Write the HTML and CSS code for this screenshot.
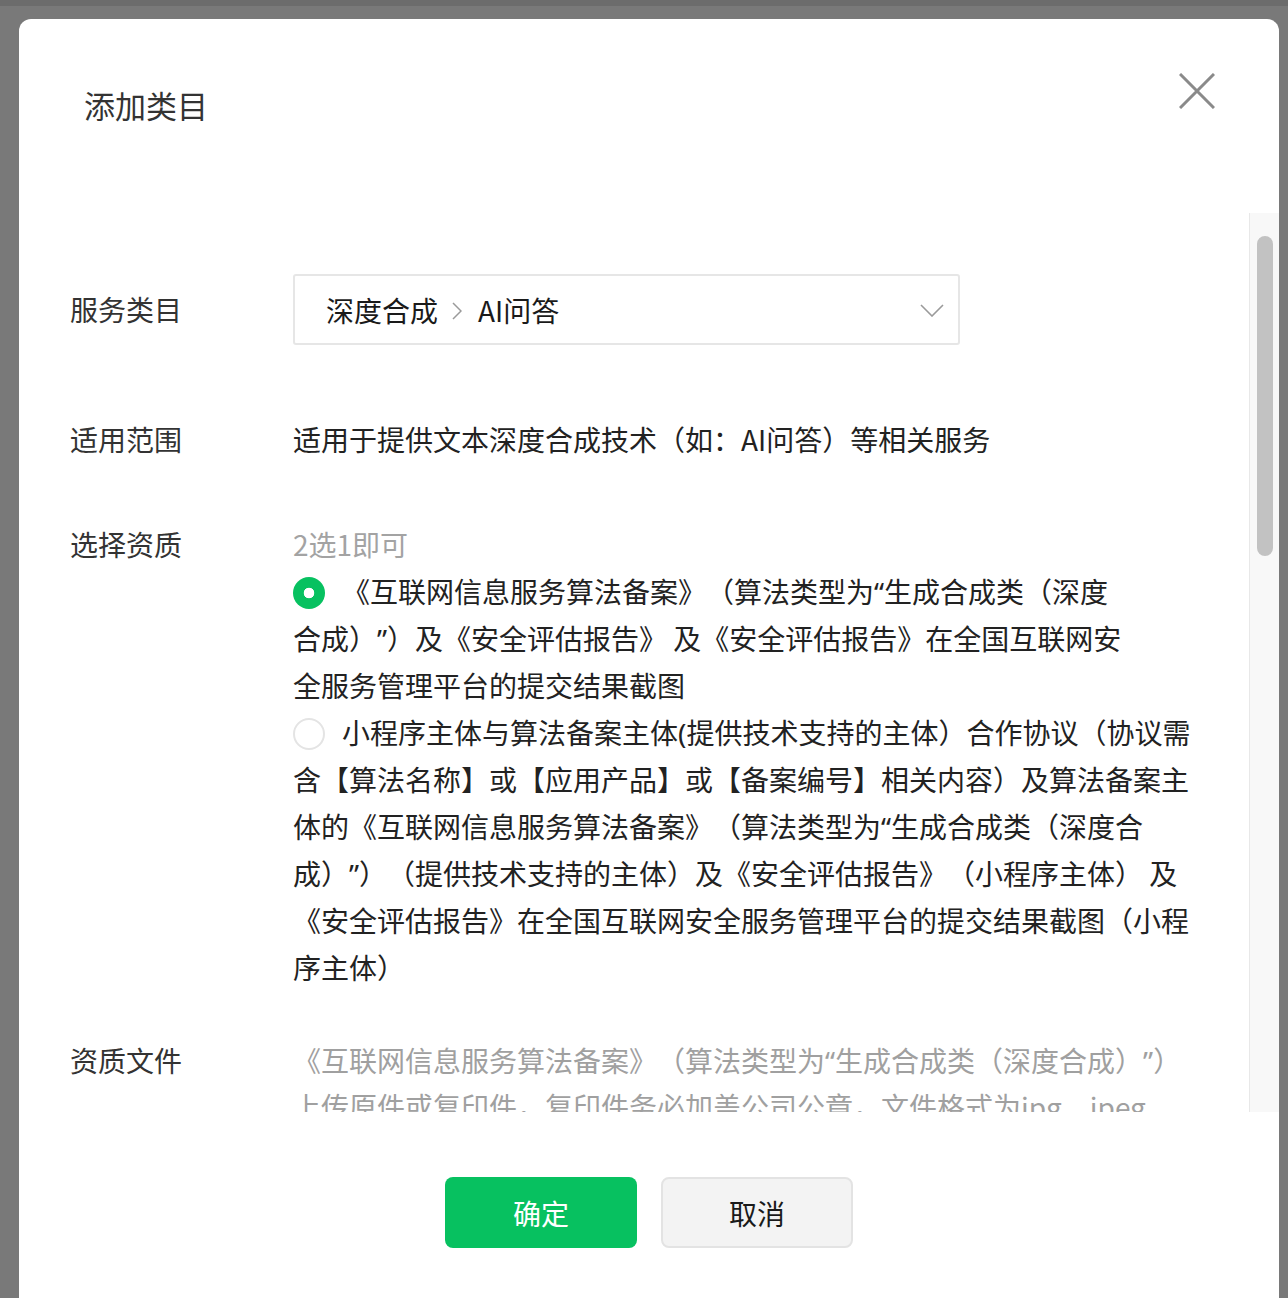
FILE: index.html
```html
<!DOCTYPE html>
<html lang="zh-CN">
<head>
<meta charset="utf-8">
<title>添加类目</title>
<link rel="stylesheet" href="styles.css">
</head>
<body>
<div class="modal">
  <div class="modal-header">
    <h2 class="modal-title">添加类目</h2>
    <button class="close-btn" aria-label="关闭">
      <svg viewBox="0 0 36 36"><path d="M1 1L35 35M35 1L1 35" stroke="#8a8a8a" stroke-width="3" fill="none"/></svg>
    </button>
  </div>
  <div class="modal-body">
    <div class="scroll-content">
      <div class="form-row row-select">
        <div class="label">服务类目</div>
        <div class="field">
          <div class="select">
            <span class="crumb">深度合成</span>
            <svg class="crumb-sep" viewBox="0 0 10 20"><polyline points="1,2 9,10 1,18" fill="none" stroke="#9a9a9a" stroke-width="1.5"/></svg>
            <span class="crumb">AI问答</span>
            <svg class="chevron" viewBox="0 0 24 13"><polyline points="1,1 12,12 23,1" fill="none" stroke="#9a9a9a" stroke-width="1.6"/></svg>
          </div>
        </div>
      </div>
      <div class="form-row row-scope">
        <div class="label">适用范围</div>
        <div class="field">适用于提供文本深度合成技术（如：AI问答）等相关服务</div>
      </div>
      <div class="form-row row-qual">
        <div class="label">选择资质</div>
        <div class="field">
          <div class="hint">2选1即可</div>
          <div class="option option-1"><span class="radio radio-on"></span>《互联网信息服务算法备案》（算法类型为<span class="q">“</span>生成合成类（深度合成）<span class="q">”</span>）及《安全评估报告》 及《安全评估报告》在全国互联网安全服务管理平台的提交结果截图</div>
          <div class="option option-2"><span class="radio radio-off"></span>小程序主体与算法备案主体<span class="q">(</span>提供技术支持的主体）合作协议（协议需含【算法名称】或【应用产品】或【备案编号】相关内容）及算法备案主体的《互联网信息服务算法备案》（算法类型为<span class="q">“</span>生成合成类（深度合成）<span class="q">”</span>）（提供技术支持的主体）及《安全评估报告》（小程序主体） 及《安全评估报告》在全国互联网安全服务管理平台的提交结果截图（小程序主体）</div>
        </div>
      </div>
      <div class="form-row row-file">
        <div class="label">资质文件</div>
        <div class="field file-desc">
          <div>《互联网信息服务算法备案》（算法类型为<span class="q">“</span>生成合成类（深度合成）<span class="q">”</span>）</div>
          <div>上传原件或复印件，复印件务必加盖公司公章，文件格式为jpg、jpeg、png，大小不超过10M</div>
        </div>
      </div>
    </div>
    <div class="scrollbar"><div class="scrollbar-thumb"></div></div>
  </div>
  <div class="modal-footer">
    <button class="btn btn-primary">确定</button>
    <button class="btn btn-default">取消</button>
  </div>
</div>
</body>
</html>
```
FILE: styles.css
```css
html, body {
  margin: 0;
  height: 1298px;
  overflow: hidden;
}
body {
  background: linear-gradient(#6c6c6c 0 6px, #797979 6px);
  font-family: "Noto Sans CJK SC", "Noto Sans", sans-serif;
  text-spacing-trim: space-all;
}
.q {
  font-family: "Noto Sans", "Liberation Sans", sans-serif;
  line-height: 0;
}
.modal {
  margin: 19px 9px 0 19px;
  width: 1260px;
  height: 1300px;
  background: #fff;
  border-radius: 12px 12px 0 0;
  display: flex;
  flex-direction: column;
}
.modal-header {
  height: 194px;
  flex: none;
  display: flex;
  justify-content: space-between;
  align-items: flex-start;
  padding: 0 64px 0 65px;
  box-sizing: border-box;
}
.modal-title {
  margin: 66px 0 0;
  font-size: 31px;
  line-height: 40px;
  font-weight: 400;
  color: #333;
}
.close-btn {
  margin-top: 54px;
  width: 36px;
  height: 36px;
  padding: 0;
  border: 0;
  background: none;
}
.close-btn svg {
  display: block;
  width: 36px;
  height: 36px;
}
.modal-body {
  height: 899px;
  flex: none;
  display: flex;
}
.scroll-content {
  flex: 1;
  overflow: hidden;
  padding: 61px 0 0 51px;
}
.form-row {
  display: flex;
}
.label {
  width: 223px;
  flex: none;
  font-size: 28px;
  line-height: 47px;
  color: #333;
}
.field {
  font-size: 28px;
  line-height: 47px;
  color: #222;
}
.row-select {
  align-items: center;
}
.select {
  width: 667px;
  height: 71px;
  box-sizing: border-box;
  border: 2px solid #e6e6e6;
  border-radius: 3px;
  display: flex;
  align-items: center;
  padding: 2px 14px 0 31px;
  color: #1a1a1a;
}
.crumb-sep {
  width: 10px;
  height: 20px;
  margin: 0 16px 0 14px;
}
.chevron {
  margin-left: auto;
  width: 24px;
  height: 13px;
}
.row-scope {
  margin-top: 71px;
}
.row-qual {
  margin-top: 58px;
}
.row-file {
  margin-top: 46px;
}
.row-file .label,
.row-file .field {
  line-height: 46px;
}
.file-desc {
  color: #a0a0a0;
  width: 902px;
}
.hint {
  color: #a3a3a3;
}
.option-1 {
  width: 840px;
}
.option-2 {
  width: 902px;
}
.radio {
  display: inline-block;
  width: 32px;
  height: 32px;
  border-radius: 50%;
  box-sizing: border-box;
  vertical-align: middle;
  margin: -5px 17px 0 0;
}
.radio-on {
  background: radial-gradient(circle, #fff 0 5px, #07c160 5.6px);
}
.radio-off {
  border: 2px solid #e4e4e4;
}
.scrollbar {
  width: 30px;
  flex: none;
  box-sizing: border-box;
  border-left: 1px solid #e8e8e8;
  background: #f8f8f8;
  padding: 23px 6px 0 7px;
}
.scrollbar-thumb {
  height: 320px;
  background: #c2c2c2;
  border-radius: 8px;
}
.modal-footer {
  display: flex;
  justify-content: center;
  gap: 24px;
  padding-top: 65px;
}
.btn {
  width: 192px;
  height: 71px;
  border-radius: 8px;
  font-size: 28px;
  font-family: inherit;
  padding: 0;
}
.btn-primary {
  background: #07c160;
  color: #fff;
  border: 0;
}
.btn-default {
  background: #f3f3f3;
  color: #1a1a1a;
  border: 2px solid #e3e3e3;
}
```
